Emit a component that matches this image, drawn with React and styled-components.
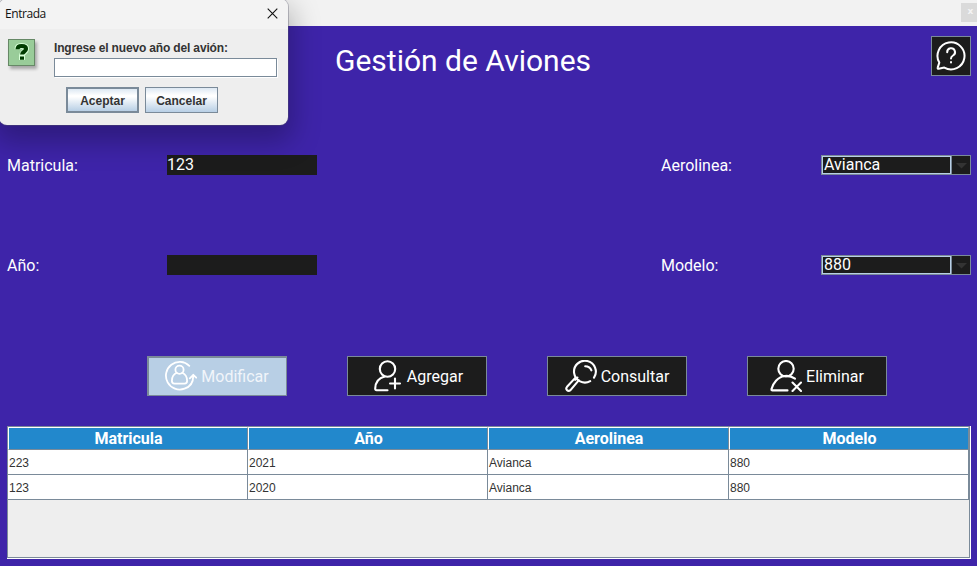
import React from "react";
import styled, { createGlobalStyle, css } from "styled-components";

const Global = createGlobalStyle`
  * { box-sizing: border-box; }
  body { margin: 0; overflow: hidden; }
`;

const Window = styled.div`
  position: relative;
  width: 977px;
  height: 566px;
  overflow: hidden;
  display: flex;
  flex-direction: column;
  background: #3e24a9;
  color: #fff;
  font: 400 16px/20px Roboto, sans-serif;
`;

const TitleStrip = styled.div`
  height: 26px;
  flex: none;
  display: flex;
  justify-content: flex-end;
  padding-top: 3px;
  background: #f2f2f2;
`;

const StripClose = styled.div`
  width: 16px;
  height: 19px;
  background: #dadada;
  color: #f4f4f4;
  font: 700 9px/17px "DejaVu Sans", sans-serif;
  text-align: center;
  padding-left: 3px;
`;

const Header = styled.header`
  height: 129px;
  display: flex;
  justify-content: space-between;
  padding: 10px 6px 0 335px;
`;

const Heading = styled.h1`
  margin: 7px 0 0;
  font-size: 30px;
  line-height: 36px;
  font-weight: 400;
  white-space: nowrap;
`;

const HelpButton = styled.div`
  width: 40px;
  height: 40px;
  display: flex;
  align-items: center;
  justify-content: center;
  background: #1c1c1c;
  border: 1px solid #7a8a99;
`;

const Form = styled.div`
  display: grid;
  grid-template-columns: 160px 150px 344px 160px 150px;
  grid-auto-rows: 20px;
  row-gap: 80px;
  padding-left: 7px;
`;

const Label = styled.label`
  padding-top: 1px;
  white-space: nowrap;
`;

const Gap = styled.span``;

const Field = styled.div`
  background: #1c1c1c;
  line-height: 19px;
`;

const Combo = styled.div`
  display: flex;
  background: #1c1c1c;
  border: 1px solid #7a8a99;
`;

const ComboValue = styled.div`
  width: 129px;
  border: 1px solid #b8cfe5;
  padding-left: 1px;
  line-height: 15px;
`;

const ComboArrow = styled.div`
  flex: 1;
  display: flex;
  align-items: center;
  justify-content: center;
  padding-top: 2px;
  border-left: 1px solid #7a8a99;
`;

const Actions = styled.div`
  display: flex;
  gap: 60px;
  padding: 81px 0 0 147px;
`;

const ActionButton = styled.div`
  width: 140px;
  height: 40px;
  display: flex;
  align-items: center;
  justify-content: center;
  gap: 4px;
  background: ${(p) => (p.$pressed ? "#b8cfe5" : "#1c1c1c")};
  border: 1px solid #7a8a99;
  ${(p) => p.$pressed && css`
    border-width: 2px 1px 1px 2px;
    padding: 0 1px 1px 0;
    color: #f1f5fa;
  `}
  svg { flex: none; display: block; }
`;

const ActionText = styled.span`
  padding-top: 2px;
`;

const TablePane = styled.div`
  margin: 30px 0 0 7px;
  width: 964px;
  height: 133px;
  border-right: 1px solid #fff;
  border-bottom: 1px solid #fff;
`;

const TableInner = styled.div`
  height: 132px;
  border: 1px solid #7a8a99;
  background: #eee;
`;

const Row = styled.div`
  display: grid;
  grid-template-columns: 240px 240px 241px 240px;
`;

const HeadCell = styled.div`
  height: 23px;
  background: #2288cc;
  border: 1px solid;
  border-color: #fff #7a8a99 #7a8a99 #fff;
  padding-left: 1px;
  text-align: center;
  font-weight: 700;
  line-height: 21px;
`;

const Cell = styled.div`
  height: 25px;
  background: #fff;
  border-right: 1px solid #7a8a99;
  border-bottom: 1px solid #7a8a99;
  padding-left: 1px;
  color: #333;
  font: 400 12px/26px "Liberation Sans", Arial, sans-serif;
`;

const Dialog = styled.section`
  position: absolute;
  left: -1px;
  top: -1px;
  width: 289px;
  height: 126px;
  border-radius: 8px;
  background: #eee;
  box-shadow: 0 0 0 1px rgba(90, 90, 110, 0.35), 0 12px 28px 5px rgba(0, 0, 0, 0.26);
  color: #333;
`;

const DialogBar = styled.div`
  height: 30px;
  display: flex;
  justify-content: space-between;
  align-items: center;
  padding: 0 10px 0 6px;
  border-radius: 8px 8px 0 0;
  background: #f3f3f3;
  color: #111;
  font: 400 12px/16px "Open Sans", sans-serif;
  letter-spacing: -0.45px;
  svg { margin-bottom: 2px; }
`;

const DialogBody = styled.div`
  display: flex;
  gap: 19px;
  padding: 10px 0 0 9px;
`;

const QuestionBadge = styled.div`
  width: 27px;
  height: 27px;
  flex: none;
  background: #99cc99;
  border: 1px solid #668866;
  box-shadow: 2px 3px 3px rgba(0, 0, 0, 0.3);
`;

const Prompt = styled.div`
  width: 223px;
  font: 700 12px/18px "Liberation Sans", Arial, sans-serif;
`;

const PromptText = styled.div`
  letter-spacing: -0.16px;
`;

const PromptInput = styled.div`
  height: 19px;
  margin-top: 1px;
  background: #fff;
  border: 1px solid #7a8a99;
  box-shadow: 1px 1px 0 #fff;
`;

const DialogButtons = styled.div`
  display: flex;
  gap: 6px;
  padding: 10px 0 0 12px;
`;

const DialogButton = styled.div`
  width: 73px;
  height: 26px;
  border: ${(p) => (p.$primary ? 2 : 1)}px solid #7a8a99;
  line-height: ${(p) => (p.$primary ? 24 : 26)}px;
  text-align: center;
  background: linear-gradient(#dde8f3 0%, #fff 30%, #fff 35%, #b8cfe5 100%);
`;

const stroke = {
  fill: "none",
  stroke: "#fff",
  strokeWidth: 2.1,
  strokeLinecap: "round",
  strokeLinejoin: "round",
};

const EditUserIcon = () => (
  <svg width="32" height="32" viewBox="0 0 32 32" {...stroke} strokeWidth="1.8">
    <path d="M24.300 5.800A13.800 13.800 0 1 0 19.500 28.700C25 27 28.300 22 28.300 15.500" />
    <path d="M24.800 18.300l3.500-3.500 2.900 2.900" />
    <circle cx="14.500" cy="9.700" r="4.100" />
    <path d="M11.700 12.700c-3.100 1.400-4.800 4-4.800 8 0 1.900.7 2.900 2.600 2.900h10c1.900 0 2.600-1 2.600-2.900 0-4-1.700-6.600-4.800-8" />
  </svg>
);

const AddUserIcon = () => (
  <svg width="32" height="32" viewBox="0 0 32 32" {...stroke}>
    <circle cx="16.500" cy="9" r="7.700" />
    <path d="M13.700 16.500C7.500 18 4.400 23 4.200 28.600c0 1.200.5 1.700 1.400 1.700H16.500M24 18.500v10M19 23.500h10" />
  </svg>
);

const SearchIcon = () => (
  <svg width="32" height="32" viewBox="0 0 32 32" {...stroke}>
    <path d="M29 17.700A10.900 10.900 0 1 0 25.200 21.200" />
    <path d="M20.200 6.300c3.200.1 5.300 1.600 6.200 4" />
    <path d="M10.500 17.600L2 26.800c-2 2.400 1 5.400 3.500 3.300L13.700 20.300M10.200 19.800l2.200-2.200" />
  </svg>
);

const RemoveUserIcon = () => (
  <svg width="32" height="32" viewBox="0 0 32 32" {...stroke}>
    <circle cx="16" cy="8.700" r="7.700" />
    <path d="M25 18.600c-6.600-4.600-14.500-3-19 2.200-2.500 2.800-4 5.600-4.600 8.400-.2.800.3 1.200 1 1.200H17.500" />
    <path d="M22.500 22.500l8.500 8.500M31 22.500l-8.500 8.500" />
  </svg>
);

const HelpIcon = () => (
  <svg width="32" height="32" viewBox="0 0 32 32" {...stroke} strokeWidth="2">
    <path d="M4.300 22.600A13.500 13.500 0 1 1 9.300 27.600L3.700 28.700c-.8.200-1.300-.4-1-1.100z" />
    <path d="M12.200 12.200a3.900 3.900 0 1 1 5.800 3.300c-1.400.8-2 1.500-2 3" />
    <path d="M16 22v.4" />
  </svg>
);

const QuestionMark = () => (
  <svg width="25" height="25" viewBox="0 0 25 25" fill="none">
    <path d="M8.500 9.200C8.500 6.600 10.200 6 12.700 6s4.400.9 4.400 3.100c0 2.600-4.100 2.900-4.100 6.200v4.800" stroke="#d6ffd6" strokeWidth="6" />
    <path d="M8.500 9.200C8.500 6.600 10.200 6 12.700 6s4.400.9 4.400 3.100c0 2.600-4.100 2.700-4.100 5.400M13 16.400v3.400" stroke="#003c00" strokeWidth="4" />
  </svg>
);

const CloseIcon = () => (
  <svg width="11" height="11" viewBox="0 0 11 11" stroke="#111" strokeWidth="1.100">
    <path d="M.7.700l9.600 9.600M10.300.700L.7 10.300" />
  </svg>
);

const Arrow = () => (
  <svg width="11" height="6" viewBox="0 0 11 6"><path d="M0 0h11L5.500 5.500z" fill="#333" /></svg>
);

const Select = ({ value }) => (
  <Combo>
    <ComboValue>{value}</ComboValue>
    <ComboArrow><Arrow /></ComboArrow>
  </Combo>
);

const columns = ["Matricula", "Año", "Aerolinea", "Modelo"];
const planes = [
  ["223", "2021", "Avianca", "880"],
  ["123", "2020", "Avianca", "880"],
];

export default function App() {
  return (
    <Window>
      <Global />
      <TitleStrip><StripClose>x</StripClose></TitleStrip>
      <Header>
        <Heading>Gestión de Aviones</Heading>
        <HelpButton><HelpIcon /></HelpButton>
      </Header>
      <Form>
        <Label>Matricula:</Label>
        <Field>123</Field>
        <Gap />
        <Label>Aerolinea:</Label>
        <Select value="Avianca" />
        <Label>Año:</Label>
        <Field />
        <Gap />
        <Label>Modelo:</Label>
        <Select value="880" />
      </Form>
      <Actions>
        <ActionButton $pressed><EditUserIcon /><ActionText>Modificar</ActionText></ActionButton>
        <ActionButton><AddUserIcon /><ActionText>Agregar</ActionText></ActionButton>
        <ActionButton><SearchIcon /><ActionText>Consultar</ActionText></ActionButton>
        <ActionButton><RemoveUserIcon /><ActionText>Eliminar</ActionText></ActionButton>
      </Actions>
      <TablePane>
        <TableInner>
          <Row>{columns.map((c) => <HeadCell key={c}>{c}</HeadCell>)}</Row>
          {planes.map((plane) => (
            <Row key={plane[0]}>
              {plane.map((v, i) => <Cell key={i}>{v}</Cell>)}
            </Row>
          ))}
        </TableInner>
      </TablePane>
      <Dialog>
        <DialogBar>Entrada<CloseIcon /></DialogBar>
        <DialogBody>
          <QuestionBadge><QuestionMark /></QuestionBadge>
          <Prompt>
            <PromptText>Ingrese el nuevo año del avión:</PromptText>
            <PromptInput />
            <DialogButtons>
              <DialogButton $primary>Aceptar</DialogButton>
              <DialogButton>Cancelar</DialogButton>
            </DialogButtons>
          </Prompt>
        </DialogBody>
      </Dialog>
    </Window>
  );
}
